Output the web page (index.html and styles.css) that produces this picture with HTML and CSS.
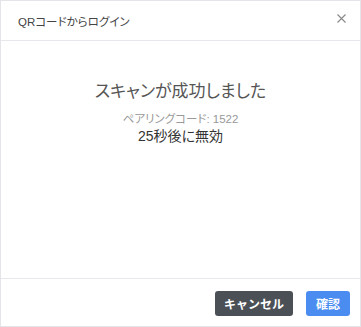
FILE: index.html
```html
<!DOCTYPE html>
<html>
<head>
  <title>QRコードからログイン</title>
  <link rel="stylesheet" href="styles.css">
</head>
<body>
  <div class="dialog">
    <div class="header">
      <span class="title">QRコードからログイン</span>
      <span class="close">
        <svg width="9" height="9" viewBox="0 0 9 9"><path d="M0.5 0.5L8.5 8.5M8.5 0.5L0.5 8.5" stroke="#888" stroke-width="1.1" fill="none"/></svg>
      </span>
    </div>
    <div class="body">
      <div class="status">スキャンが成功しました</div>
      <div class="code">ペアリングコード: 1522</div>
      <div class="expire">25秒後に無効</div>
    </div>
    <div class="footer">
      <button class="btn cancel">キャンセル</button>
      <button class="btn ok">確認</button>
    </div>
  </div>
</body>
</html>
```
FILE: styles.css
```css
body {
  margin: 0;
  padding: 0;
  font-family: "Liberation Sans", "Noto Sans CJK JP", sans-serif;
  font-feature-settings: "palt";
  background: #fff;
}

.dialog {
  width: 361px;
  height: 327px;
  box-sizing: border-box;
  border: 1px solid #e3e5e8;
  display: flex;
  flex-direction: column;
}

.header {
  height: 40px;
  box-sizing: border-box;
  border-bottom: 1px solid #e6e8eb;
  display: flex;
  align-items: center;
  justify-content: space-between;
  padding: 0 14px 0 17px;
}

.title {
  font-size: 11.5px;
  color: #444;
}

.close {
  display: flex;
  margin-top: -4px;
}

.body {
  flex: 1;
  text-align: center;
  padding-top: 39px;
}

.status {
  font-size: 17px;
  color: #555;
  line-height: 24px;
}

.code {
  font-size: 11.5px;
  color: #999;
  margin-top: 8px;
  line-height: 14px;
}

.expire {
  font-size: 14px;
  color: #333;
  line-height: 20px;
}

.footer {
  height: 48px;
  box-sizing: border-box;
  border-top: 1px solid #e6e8eb;
  display: flex;
  justify-content: flex-end;
  align-items: flex-start;
  padding: 12px 10px 0 0;
  gap: 13px;
}

.btn {
  border: none;
  border-radius: 3px;
  height: 25px;
  color: #fff;
  font-family: "Liberation Sans", "Noto Sans CJK JP", sans-serif;
  font-size: 12px;
  font-weight: bold;
  cursor: pointer;
}

.cancel {
  width: 78px;
  background: #4b5057;
}

.ok {
  width: 44px;
  background: #4a8cf0;
}
```
